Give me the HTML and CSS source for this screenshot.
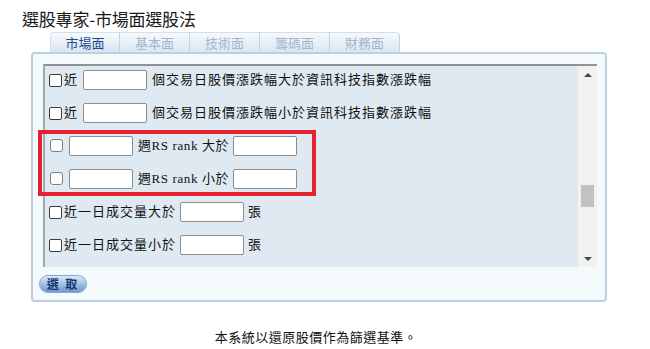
FILE: index.html
```html
<!DOCTYPE html>
<html lang="zh-Hant">
<head>
<meta charset="utf-8">
<title>選股專家-市場面選股法</title>
<link rel="stylesheet" href="styles.css">
</head>
<body>
<div class="page">
  <h1 class="title">選股專家-市場面選股法</h1>
  <div class="tabs">
    <div class="tab active">市場面</div>
    <div class="tab">基本面</div>
    <div class="tab">技術面</div>
    <div class="tab">籌碼面</div>
    <div class="tab">財務面</div>
  </div>
  <div class="panel">
    <div class="scroller">
      <div class="rows">
        <div class="row">
          <span class="cb"></span><span class="txt">近</span><span class="inp gap-l"></span><span class="txt gap-l">個交易日股價漲跌幅大於資訊科技指數漲跌幅</span>
        </div>
        <div class="row">
          <span class="cb"></span><span class="txt">近</span><span class="inp gap-l"></span><span class="txt gap-l">個交易日股價漲跌幅小於資訊科技指數漲跌幅</span>
        </div>
        <div class="row">
          <span class="cb round"></span><span class="inp gap-m"></span><span class="txt rs gap-l">週RS rank 大於</span><span class="inp gap-s"></span>
        </div>
        <div class="row">
          <span class="cb round"></span><span class="inp gap-m"></span><span class="txt rs gap-l">週RS rank 小於</span><span class="inp gap-s"></span>
        </div>
        <div class="row">
          <span class="cb"></span><span class="txt">近一日成交量大於</span><span class="inp gap-s"></span><span class="txt gap-s">張</span>
        </div>
        <div class="row">
          <span class="cb"></span><span class="txt">近一日成交量小於</span><span class="inp gap-s"></span><span class="txt gap-s">張</span>
        </div>
        <div class="highlight"></div>
      </div>
      <div class="scrollbar">
        <div class="arrow up"></div>
        <div class="thumb"></div>
        <div class="spacer"></div>
        <div class="arrow down"></div>
      </div>
    </div>
    <div class="actions">
      <span class="btn">選 取</span>
    </div>
  </div>
  <p class="note">本系統以還原股價作為篩選基準。</p>
</div>
</body>
</html>
```

FILE: styles.css
```css
html, body {
  margin: 0;
  padding: 0;
  background: #ffffff;
}

.page {
  padding-left: 22px;
  font-family: "Liberation Serif", "Noto Sans CJK TC", serif;
  color: #111;
}

.title {
  margin: 9px 0 0 0;
  height: 20px;
  line-height: 20px;
  font-family: "Noto Sans CJK TC", sans-serif;
  font-weight: normal;
  font-size: 17px;
  color: #1a1a1a;
  letter-spacing: -0.2px;
}

.tabs {
  display: flex;
  margin: 3px 0 0 28px;
  height: 20px;
}

.tab {
  width: 70px;
  height: 20px;
  box-sizing: border-box;
  text-align: center;
  line-height: 20px;
  font-family: "Noto Sans CJK TC", sans-serif;
  font-size: 13px;
  color: #a3b6ca;
  background: linear-gradient(#f6f9fc, #dbe7f2);
  border-top: 1px solid #d3dfea;
  border-right: 1px solid #c3d3e2;
}

.tab:first-child {
  border-left: 1px solid #d3dfea;
  border-radius: 4px 0 0 0;
}

.tab:last-child {
  border-radius: 0 4px 0 0;
}

.tab.active {
  color: #1b4d8b;
  background: linear-gradient(#f9fbfd, #d6e4f1);
}

.panel {
  margin-left: 9px;
  width: 576px;
  box-sizing: border-box;
  border: 2px solid #b8cfe4;
  border-radius: 4px;
  background: #f4f9fc;
  padding: 10px 8px 8px 10px;
}

.scroller {
  display: flex;
  height: 203px;
  box-sizing: border-box;
  border-top: 2px solid #8f9396;
  border-left: 2px solid #a3a8ad;
  background: #dfe9f2;
}

.rows {
  position: relative;
  flex: 1;
  padding: 4px 0 0 4px;
  display: flex;
  flex-direction: column;
  gap: 13px;
}

.row {
  display: flex;
  align-items: center;
  height: 20px;
  font-size: 13px;
  letter-spacing: 1px;
}

.cb {
  width: 13px;
  height: 13px;
  box-sizing: border-box;
  border: 1px solid #3c3c3c;
  border-radius: 2px;
  background: #ffffff;
  flex: none;
  margin-right: 2px;
}

.cb.round {
  border: 1px solid #7c7f84;
  border-radius: 3px;
  margin-left: 1px;
  margin-right: 1px;
  margin-top: -2px;
}

.txt {
  white-space: nowrap;
  line-height: 20px;
}

.txt.rs {
  letter-spacing: 0.6px;
}

.inp {
  width: 64px;
  height: 20px;
  box-sizing: border-box;
  border: 1px solid #8a8d91;
  border-radius: 2px;
  background: #ffffff;
  flex: none;
}

.gap-l { margin-left: 5px; }
.gap-m { margin-left: 5px; }
.gap-s { margin-left: 4px; }

.highlight {
  position: absolute;
  left: -7px;
  top: 64px;
  width: 278px;
  height: 66px;
  box-sizing: border-box;
  border: 4px solid #e52330;
}

.scrollbar {
  width: 19px;
  flex: none;
  display: flex;
  flex-direction: column;
  background: #f1f1f1;
}

.arrow {
  height: 17px;
  display: flex;
  align-items: center;
  justify-content: center;
  flex: none;
}

.arrow::before {
  content: "";
  width: 0;
  height: 0;
  border-left: 4px solid transparent;
  border-right: 4px solid transparent;
}

.arrow.up::before {
  border-bottom: 4px solid #4a4a4a;
}

.arrow.down::before {
  border-top: 4px solid #4a4a4a;
}

.thumb {
  margin: 102px 3px 0 3px;
  height: 22px;
  background: #c2c2c2;
  flex: none;
}

.spacer {
  flex: 1;
}

.actions {
  margin-top: 8px;
  height: 17px;
  display: flex;
}

.btn {
  margin-left: -4px;
  width: 48px;
  height: 18px;
  box-sizing: border-box;
  border-radius: 9px;
  background: linear-gradient(#dce9f7, #a2c0e5 50%, #7099cd);
  border: 1px solid #86a7d2;
  font-family: "Noto Sans CJK TC", sans-serif;
  font-size: 12px;
  font-weight: bold;
  line-height: 16px;
  color: #15366e;
  text-align: center;
  letter-spacing: 2px;
}

.note {
  margin: 27px 0 0 9px;
  width: 570px;
  text-align: center;
  font-family: "Noto Sans CJK TC", sans-serif;
  font-size: 13px;
  line-height: 16px;
  letter-spacing: 0.5px;
  color: #111;
}
```
